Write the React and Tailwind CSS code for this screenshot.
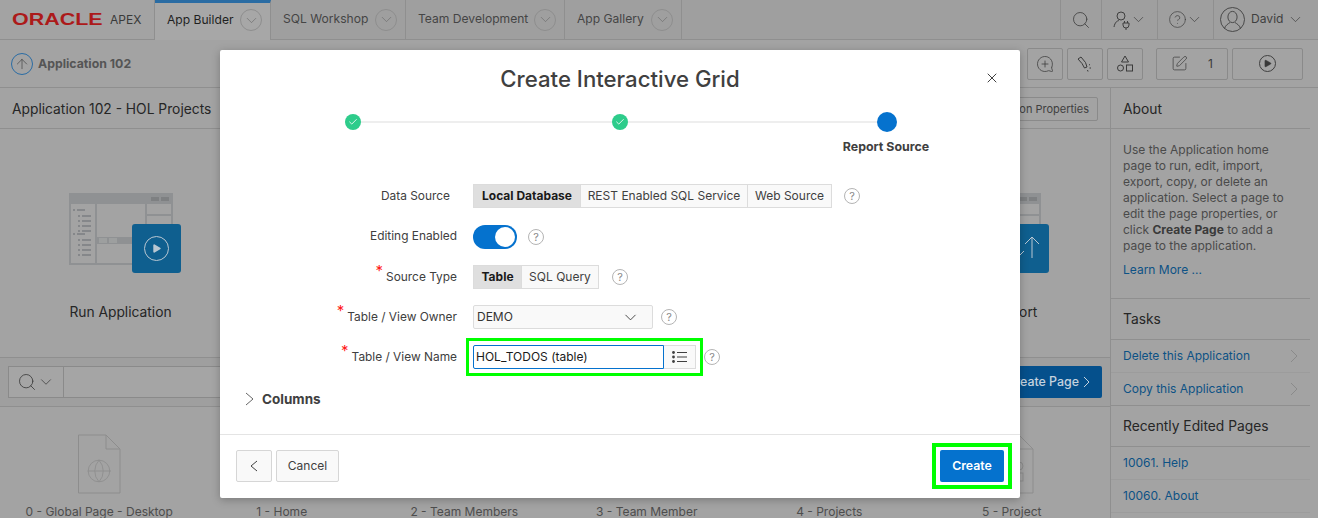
import React from "react";
import { ChevronDown, Search, X, Check, ArrowUp, CircleHelp, SquarePen, Play, MessageCirclePlus, Globe } from "lucide-react";

function Chev({ size = 18, cls = "" }) {
  return <ChevronDown size={size} strokeWidth={1} className={cls} />;
}

function Tab({ label, active, w }) {
  return (
    <div className={`h-10 flex items-center justify-between pl-3 pr-[8px] border-r border-[#8f8f8f] ${w} ${active ? "bg-[#a7a7a7] border-t-[3px] border-t-[#2a6ca3] pb-[3px] text-[#1f1f1f]" : "border-b border-b-[#8f8f8f] text-[#454545]"}`}>
      <span className="text-[12.1px]">{label}</span>
      <span className="w-[22px] h-[22px] rounded-full border border-[#8e8e8e] flex items-center justify-center text-[#6e6e6e]">
        <Chev size={17} />
      </span>
    </div>
  );
}

function ToolBtn({ w, children }) {
  return <div className={`h-8 ${w} border border-[#8a8a8a] rounded-[2px] flex items-center justify-center text-[#3a3a3a]`}>{children}</div>;
}

function Help() {
  return (
    <span className="w-4 h-4 rounded-full border border-[#b4b4b4] flex items-center justify-center text-[11px] leading-none text-[#8a8a8a]">?</span>
  );
}

function Seg({ children, active, w }) {
  return (
    <div className={`h-6 ${w} flex items-center justify-center text-[12px] border border-[#dcdcdc] -ml-px first:ml-0 ${active ? "bg-[#dfdfdf] font-bold text-[#1a1a1a]" : "bg-[#f9f9f9] text-[#404040]"}`}>{children}</div>
  );
}

function Row({ label, req, children, mb = "mb-4", pr = "", lift = "" }) {
  return (
    <div className={`flex items-center h-6 ${mb}`}>
      <div className={`w-[237px] flex justify-end text-[11.9px] text-[#404040] ${pr} ${lift}`}>
        {req && <span className="text-[#ff1a1a] text-[15px] leading-none -mt-[5px] mr-[3px]">*</span>}
        <span>{label}</span>
      </div>
      <div className="ml-4 flex items-center">{children}</div>
    </div>
  );
}

function WindowArt({ icon }) {
  const c = "#8f9193";
  const sub = [22, 27, 32, 37, 46, 51, 56, 61];
  return (
    <div className="relative w-[112px] h-[80px]">
      <svg width="104" height="72" viewBox="0 0 104 72" fill="none">
        <rect x="1" y="1" width="102" height="70" stroke={c} strokeWidth="2" />
        <rect x="0" y="0" width="104" height="11" fill={c} />
        <rect x="82" y="4" width="8" height="4" fill="#7e8082" />
        <rect x="92" y="4" width="8" height="4" fill="#7e8082" />
        <rect x="26" y="11" width="2" height="60" fill={c} />
        <rect x="76" y="11" width="2" height="40" fill={c} />
        <rect x="76" y="21" width="28" height="2" fill={c} />
        <rect x="28" y="44" width="76" height="7" fill={c} />
        <rect x="30" y="45" width="8" height="5" fill="#9d9f9f" />
        <rect x="40" y="45" width="8" height="5" fill="#9d9f9f" />
        <rect x="4" y="16" width="2" height="2" fill="#85878a" />
        <rect x="8" y="16" width="8" height="2" fill="#85878a" />
        <rect x="4" y="40" width="2" height="2" fill="#85878a" />
        <rect x="8" y="40" width="8" height="2" fill="#85878a" />
        {sub.map((y) => (
          <g key={y}>
            <rect x="9" y={y} width="2" height="2" fill="#85878a" />
            <rect x="13" y={y} width="9" height="2" fill="#85878a" />
          </g>
        ))}
      </svg>
      <div className="absolute right-0 bottom-0 w-[49px] h-[49px] rounded-[3px] bg-[#0f5f8f] flex items-center justify-center text-[#b9c7d2]">{icon}</div>
    </div>
  );
}

function PageIcon({ label, children }) {
  return (
    <div className="flex flex-col items-center pt-[27px]">
      <div className="relative w-[44px] h-[60px]">
        <svg width="44" height="60" viewBox="0 0 44 60" fill="none" stroke="#8d8d8d" strokeWidth="1">
          <path d="M1.5 1 H29 L43 15 V59 H1.5 Z" />
          <path d="M29 1 V15 H43" />
        </svg>
        {children}
      </div>
      <div className="mt-[10px] text-[12px] leading-4 text-[#4d4d4d] whitespace-nowrap">{label}</div>
    </div>
  );
}

function TaskLink({ children, chev, faint }) {
  return (
    <div className={`h-[33px] flex items-center justify-between pl-3 pr-[12px] border-b ${faint ? "border-[#9c9c9c]" : "border-[#8f8f8f]"} text-[12px] text-[#0d5285]`}>
      <span>{children}</span>
      {chev && (
        <svg width="8" height="14" viewBox="0 0 8 14" fill="none" stroke="#8a8a8a" strokeWidth="1"><path d="M1 1 L7 7 L1 13" /></svg>
      )}
    </div>
  );
}

export default function App() {
  return (
    <div className="relative w-[1318px] h-[518px] overflow-hidden bg-[#a3a3a3] text-[#333]" style={{ fontFamily: "Inter, 'Noto Sans', sans-serif" }}>
      {/* header */}
      <header className="h-10 flex bg-[#9f9f9f]">
        <div className="w-[155px] h-10 border-b border-[#8f8f8f] border-r flex items-center pl-3 bg-[#a3a3a3]">
          <span className="w-[93px] text-[#ac1a1a] text-[16.5px] font-bold leading-none scale-x-[1.3] origin-left" style={{ fontFamily: "'Liberation Sans', sans-serif" }}>ORACLE</span>
          <span className="ml-[5px] text-[12px] text-[#3a3a3a]">APEX</span>
        </div>
        <Tab label="App Builder" active w="w-[116px]" />
        <Tab label="SQL Workshop" w="w-[135px]" />
        <Tab label="Team Development" w="w-[159px]" />
        <Tab label="App Gallery" w="w-[117px]" />
        <div className="flex-1 h-10 border-b border-[#8f8f8f] flex justify-end">
          <div className="w-[41px] border-l border-[#8f8f8f] flex items-center justify-center text-[#3f3f3f]"><Search size={20} strokeWidth={1} /></div>
          <div className="w-[56px] border-l border-[#8f8f8f] flex items-center justify-center text-[#3f3f3f] -space-x-[1px]">
            <svg width="18" height="20" viewBox="0 0 18 20" fill="none" stroke="currentColor" strokeWidth="1"><circle cx="8" cy="6" r="4" /><path d="M1 17 C2 12 4 11 6 10.5" /><path d="M10 13 h6 v2 a3 3 0 0 1 -6 0 z M11.5 13 v-2 M14.5 13 v-2 M13 18 v2" /></svg>
            <Chev size={17} />
          </div>
          <div className="w-[56px] border-l border-[#8f8f8f] flex items-center justify-center text-[#3f3f3f] -space-x-[1px]">
            <CircleHelp size={19} strokeWidth={0.9} /><Chev size={17} />
          </div>
          <div className="w-[105px] border-l border-[#8f8f8f] flex items-center pl-[6px] text-[#3f3f3f]">
            <svg width="25" height="25" viewBox="0 0 25 25" fill="none" stroke="currentColor" strokeWidth="0.9">
              <circle cx="12.5" cy="12.5" r="12" />
              <ellipse cx="12.5" cy="10" rx="4.6" ry="5.6" />
              <path d="M4.5 21.5 C5.5 18 8 17 10 15.5 M20.5 21.5 C19.5 18 17 17 15 15.5" />
            </svg>
            <span className="text-[12.1px] ml-[6px]">David</span>
            <span className="ml-[4px]"><Chev size={17} /></span>
          </div>
        </div>
      </header>

      {/* toolbar */}
      <div className="h-[48px] flex items-center justify-between pl-[11px] pr-[15px] border-b border-[#8f8f8f]">
        <div className="flex items-center gap-[5px] pt-[1px]">
          <span className="w-[22px] h-[22px] rounded-full border border-[#2a6ca3] flex items-center justify-center text-[#404040]"><ArrowUp size={16} strokeWidth={1} /></span>
          <span className="text-[12.3px] font-bold text-[#555]">Application 102</span>
        </div>
        <div className="flex items-center">
          <div className="flex gap-1 mr-[13px]">
            <ToolBtn w="w-9"><MessageCirclePlus size={18} strokeWidth={1} className="-scale-x-100" /></ToolBtn>
            <ToolBtn w="w-9">
              <svg width="18" height="18" viewBox="0 0 18 18" fill="none" stroke="currentColor" strokeWidth="1">
                <path d="M2 4 L5 2 L9.5 7.5 L11 12 L8.5 13 L6 8.5 Z" />
                <path d="M13 10 l1 -0.5 M13.5 13 h1.5 M11.5 15 l0.5 1.5" />
              </svg>
            </ToolBtn>
            <ToolBtn w="w-9">
              <svg width="18" height="20" viewBox="0 0 18 20" fill="none" stroke="currentColor" strokeWidth="1">
                <path d="M9 2 L12.5 8 H5.5 Z" />
                <circle cx="4.5" cy="14" r="3" />
                <rect x="10.5" y="11" width="6" height="6" />
              </svg>
            </ToolBtn>
          </div>
          <div className="flex gap-1">
            <ToolBtn w="w-[72px] gap-5"><SquarePen size={17} strokeWidth={1} /><span className="text-[12px]">1</span></ToolBtn>
            <ToolBtn w="w-[71px]"><span className="w-[17px] h-[17px] rounded-full border border-[#404040] flex items-center justify-center"><Play size={9} fill="currentColor" strokeWidth={1} /></span></ToolBtn>
          </div>
        </div>
      </div>

      {/* body */}
      <div className="flex h-[430px]">
        <main className="w-[1110px]">
          <div className="h-[41px] border-b border-[#8f8f8f] flex items-center justify-between pl-3 pr-3 pt-[2px]">
            <span className="text-[13.8px] text-[#262626]">Application 102 - HOL Projects</span>
            <span className="h-6 px-2 flex items-center border border-[#8a8a8a] rounded-[2px] text-[11px] text-[#404040]">Application Properties</span>
          </div>
          <div className="h-[229px] grid grid-cols-[repeat(5,217px)] pl-3 border-b border-[#8f8f8f]">
            <div className="flex flex-col items-center pt-[64px]">
              <div className="ml-[9px]"><WindowArt icon={<span className="w-[25px] h-[25px] rounded-full border border-[#b9c7d2] flex items-center justify-center"><Play size={11} fill="currentColor" strokeWidth={0} /></span>} /></div>
              <div className="mt-[29px] text-[13.8px] leading-5 text-[#262626]">Run Application</div>
            </div>
            <div className="col-start-5 flex flex-col items-center pt-[64px]">
              <div className="ml-[9px]">
                <WindowArt icon={
                  <svg width="49" height="49" viewBox="0 0 49 49" fill="none" stroke="currentColor" strokeWidth="1">
                    <path d="M32 34 V13 M25 20 L32 13 L39 20" />
                    <path d="M17 13 V34 M10 27 L17 34 L24 27" />
                  </svg>
                } />
              </div>
              <div className="mt-[29px] text-[13.8px] leading-5 text-[#262626]">Export / Import</div>
            </div>
          </div>
          <div className="h-[49px] flex items-center pl-2 pr-2 bg-[#9f9f9f] border-b border-[#8f8f8f]">
            <div className="flex-1 h-8 border border-[#8a8a8a] flex bg-[#a5a5a5]">
              <div className="w-[55px] border-r border-[#8a8a8a] flex items-center justify-center text-[#3a3a3a]">
                <Search size={20} strokeWidth={1} /><Chev size={18} />
              </div>
            </div>
            <div className="ml-[12px] h-8 w-[110px] rounded-[2px] bg-[#05508c] flex items-center justify-end pr-[12px] gap-[4px] text-[12.4px] font-medium text-[#c5d3df] whitespace-nowrap">
              Create Page
              <svg width="7" height="12" viewBox="0 0 7 12" fill="none" stroke="currentColor" strokeWidth="1"><path d="M1 1 L6 6 L1 11" /></svg>
            </div>
          </div>
          <div className="grid grid-cols-[repeat(6,182.5px)] pl-2">
            <PageIcon label="0 - Global Page - Desktop">
              <span className="absolute left-[9px] top-[24px] text-[#8d8d8d]"><Globe size={26} strokeWidth={0.8} /></span>
            </PageIcon>
            <PageIcon label="1 - Home" />
            <PageIcon label="2 - Team Members" />
            <PageIcon label="3 - Team Member" />
            <PageIcon label="4 - Projects" />
            <PageIcon label="5 - Project">
              <svg className="absolute left-[20px] top-[27px]" width="16" height="22" viewBox="0 0 16 22" fill="none" stroke="#8d8d8d" strokeWidth="1">
                <circle cx="9" cy="5" r="4" />
                <rect x="3" y="12" width="10" height="8" />
              </svg>
            </PageIcon>
          </div>
        </main>
        <aside className="w-[200px] border-l border-[#8f8f8f]">
          <div className="h-[41px] flex items-center pl-3 pt-[2px] border-b border-[#8f8f8f] text-[13.8px] text-[#262626]">About</div>
          <div className="h-[170px] pl-3 pr-3 pt-[13px] border-b border-[#8f8f8f] text-[12px] leading-4 text-[#4a4a4a]">
            <p>Use the Application home page to run, edit, import, export, copy, or delete an application. Select a page to edit the page properties, or click <b className="text-[#3a3a3a]">Create Page</b> to add a page to the application.</p>
            <p className="mt-2 text-[#0d5285]">Learn More ...</p>
          </div>
          <div className="h-[41px] flex items-center pl-3 border-b border-[#8f8f8f] text-[13.8px] text-[#262626]">Tasks</div>
          <TaskLink chev faint>Delete this Application</TaskLink>
          <TaskLink chev>Copy this Application</TaskLink>
          <div className="h-[41px] flex items-center pl-3 border-b border-[#8f8f8f] text-[13.8px] text-[#262626]">Recently Edited Pages</div>
          <TaskLink faint>10061. Help</TaskLink>
          <TaskLink faint>10060. About</TaskLink>
        </aside>
      </div>

      {/* modal */}
      <div className="absolute left-[220px] top-[50px] w-[800px] h-[448px] bg-white rounded-[2px] shadow-[0_2px_8px_rgba(0,0,0,0.25)] flex flex-col">
        <div className="relative h-[55px] flex items-center justify-center pt-[3px]">
          <span className="text-[22.2px] font-medium text-[#404040]">Create Interactive Grid</span>
          <X size={16} strokeWidth={1.4} className="absolute right-[20px] top-[20px] text-[#333]" />
        </div>
        <div className="relative h-[60px]">
          <div className="absolute left-[133px] top-[16px] w-[534px] h-[2px] bg-[#eeeeee]" />
          <div className="absolute left-[125px] top-[9px] w-4 h-4 rounded-full bg-[#2ecc8b] flex items-center justify-center"><Check size={10} color="white" strokeWidth={2} /></div>
          <div className="absolute left-[392px] top-[9px] w-4 h-4 rounded-full bg-[#2ecc8b] flex items-center justify-center"><Check size={10} color="white" strokeWidth={2} /></div>
          <div className="absolute left-[657px] top-[7px] w-5 h-5 rounded-full bg-[#0572ce]" />
          <div className="absolute left-[606px] top-[33px] w-[120px] text-center text-[12.4px] font-bold text-[#404040]">Report Source</div>
        </div>
        <div className="pt-[19px]">
          <Row label="Data Source" mb="mb-[17px]" pr="pr-[7px]">
            <div className="flex">
              <Seg active w="w-[108px]">Local Database</Seg>
              <Seg w="w-[168px]">REST Enabled SQL Service</Seg>
              <Seg w="w-[85px]">Web Source</Seg>
            </div>
            <span className="ml-3"><Help /></span>
          </Row>
          <Row label="Editing Enabled" lift="-mt-[2px]">
            <div className="w-11 h-6 rounded-full bg-[#0572ce] flex items-center justify-end pr-[2px]"><div className="w-5 h-5 rounded-full bg-white" /></div>
            <span className="ml-[11px]"><Help /></span>
          </Row>
          <Row label="Source Type" req>
            <div className="flex">
              <Seg active w="w-[49px]">Table</Seg>
              <Seg w="w-[78px]">SQL Query</Seg>
            </div>
            <span className="ml-[13px]"><Help /></span>
          </Row>
          <Row label="Table / View Owner" req>
            <div className="w-[180px] h-6 border border-[#dcdcdc] rounded-[2px] bg-[#f9f9f9] flex items-center justify-between pl-[3px] pr-[12px] text-[12px] text-[#333]">
              <span>DEMO</span><ChevronDown size={19} strokeWidth={1.1} />
            </div>
            <span className="ml-2"><Help /></span>
          </Row>
          <Row label="Table / View Name" req mb="mb-0">
            <div className="relative flex">
              <div className="absolute -left-[7px] -top-[7px] w-[237px] h-[38px] border-[3px] border-[#00ff00]" />
              <div className="w-[191px] h-6 border border-[#0572ce] rounded-l-[2px] flex items-center pl-[2px] text-[12px] text-[#1a1a1a]">HOL_TODOS (table)</div>
              <div className="w-8 h-6 border border-[#dcdcdc] border-l-0 bg-[#f9f9f9] flex items-center justify-center text-[#404040]">
                <svg width="15" height="12" viewBox="0 0 15 12" fill="#404040" stroke="none">
                  <circle cx="1.5" cy="1.5" r="1.4" /><circle cx="1.5" cy="6" r="1.4" /><circle cx="1.5" cy="10.5" r="1.4" />
                  <rect x="5" y="1" width="10" height="1" /><rect x="5" y="5.5" width="10" height="1" /><rect x="5" y="10" width="10" height="1" />
                </svg>
              </div>
            </div>
            <span className="ml-2"><Help /></span>
          </Row>
        </div>
        <div className="flex items-center h-5 mt-[20px] pl-[25px] text-[#404040]">
          <svg width="9" height="14" viewBox="0 0 9 14" fill="none" stroke="#666" strokeWidth="1"><path d="M1 1 L8 7 L1 13" /></svg>
          <span className="ml-[8px] text-[13.5px] font-bold">Columns</span>
        </div>
        <div className="mt-[25px] border-t border-[#e4e4e4] flex-1 flex items-start justify-between pl-4 pr-4 pt-[15px]">
          <div className="flex gap-1">
            <div className="w-9 h-8 border border-[#d6d6d6] rounded-[2px] bg-[#f9f9f9] flex items-center justify-center text-[#404040]">
              <svg width="8" height="12" viewBox="0 0 8 12" fill="none" stroke="currentColor" strokeWidth="1"><path d="M7 1 L1 6 L7 11" /></svg>
            </div>
            <div className="w-[63px] h-8 border border-[#d6d6d6] rounded-[2px] bg-[#f9f9f9] flex items-center justify-center text-[12px] text-[#404040]">Cancel</div>
          </div>
          <div className="relative w-16 h-8 rounded-[2px] bg-[#0572ce] flex items-center justify-center text-[12.3px] font-semibold text-white">
            Create
            <div className="absolute -left-2 -top-[7px] w-20 h-[46px] border-[4px] border-[#00ff00]" />
          </div>
        </div>
      </div>
    </div>
  );
}
